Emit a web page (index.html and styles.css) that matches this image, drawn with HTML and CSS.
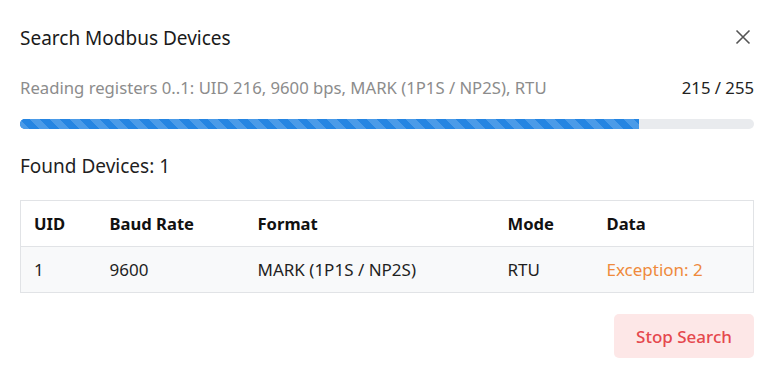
FILE: index.html
```html
<!DOCTYPE html>
<html lang="en">
  <head>
    <meta charset="UTF-8" />
    <meta name="viewport" content="width=device-width, initial-scale=1.0" />
    <title>Search Modbus Devices</title>
    <link rel="stylesheet" href="styles.css">
  </head>
  <body>
    <div class="dialog">
      <div class="head">
        <div class="title">Search Modbus Devices</div>
        <div class="close">
          <svg width="16" height="16" viewBox="0 0 16 16">
            <path d="M1.5 1.5 L14.5 14.5 M14.5 1.5 L1.5 14.5" stroke="#555" stroke-width="1.6" fill="none" />
          </svg>
        </div>
      </div>
      <div class="status">
        <span class="what">Reading registers 0..1: UID 216, 9600 bps, MARK (1P1S / NP2S), RTU</span>
        <span class="count">215 / 255</span>
      </div>
      <div class="bar"><div class="fill" style="width: 84.3%"></div></div>
      <div class="found">Found Devices: 1</div>
      <table class="devices">
        <colgroup>
          <col style="width: 76px" />
          <col style="width: 148px" />
          <col style="width: 250px" />
          <col style="width: 99px" />
          <col />
        </colgroup>
        <thead>
          <tr><th>UID</th><th>Baud Rate</th><th>Format</th><th>Mode</th><th>Data</th></tr>
        </thead>
        <tbody>
          <tr><td>1</td><td>9600</td><td>MARK (1P1S / NP2S)</td><td>RTU</td><td class="exc">Exception: 2</td></tr>
        </tbody>
      </table>
      <div class="actions">
        <button class="stop">Stop Search</button>
      </div>
    </div>
  </body>
</html>
```

FILE: styles.css
```css
* {
  margin: 0;
  box-sizing: border-box;
}
body {
  background: #fff;
  font-family: "Noto Sans", "Open Sans", sans-serif;
  color: #1f1f1f;
}
.dialog {
  padding: 20px;
}
.head {
  display: flex;
  justify-content: space-between;
  align-items: center;
  height: 36px;
}
.title {
  font-size: 19px;
  color: #1a1a1a;
}
.close {
  width: 16px;
  height: 16px;
  margin-right: 3px;
  margin-top: -2px;
}
.close svg {
  display: block;
}
.status {
  display: flex;
  justify-content: space-between;
  margin-top: 20px;
  line-height: 24px;
  font-size: 16.7px;
}
.what {
  color: #8c8c8c;
}
.count {
  color: #222;
}
.bar {
  margin-top: 19px;
  height: 10px;
  border-radius: 5px;
  background: #e9ebee;
  overflow: hidden;
}
.fill {
  height: 100%;
  background-color: #2585e2;
  background-image: repeating-linear-gradient(
    45deg,
    #4b9be8 0,
    #4b9be8 7px,
    #2585e2 7px,
    #2585e2 14px
  );
}
.found {
  margin-top: 26px;
  line-height: 22px;
  font-size: 19px;
}
.devices {
  margin-top: 23px;
  width: 100%;
  border-collapse: collapse;
  table-layout: fixed;
  border: 1px solid #e1e3e6;
  font-size: 17px;
}
.devices th,
.devices td {
  height: 46px;
  padding: 0 13px;
  text-align: left;
}
.devices th {
  font-weight: bold;
  font-size: 16.6px;
  color: #111;
  border-bottom: 1px solid #e1e3e6;
}
.devices tbody tr {
  background: #f8f9fa;
}
.exc {
  color: #ef8a3c;
}
.actions {
  display: flex;
  justify-content: flex-end;
  margin-top: 21px;
}
.stop {
  width: 140px;
  height: 44px;
  border: none;
  border-radius: 5px;
  background: #fde7e7;
  color: #e5484d;
  font-family: inherit;
  font-size: 17px;
  font-weight: 500;
}
```
